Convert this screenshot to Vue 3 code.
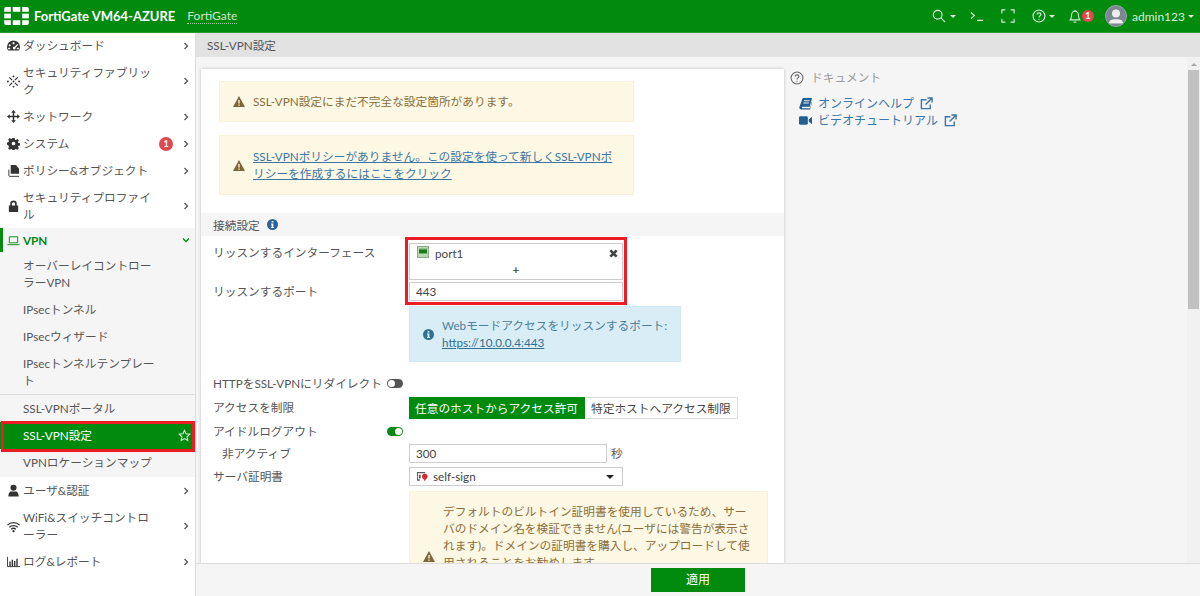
<template>
  <div class="app">
    <header class="topbar">
      <svg class="logo" viewBox="0 0 26 19">
        <path d="M2 0h5v5H0V2a2 2 0 0 1 2-2z" />
        <rect x="9" y="0" width="8" height="5" rx="0.5" />
        <path d="M19 0h5a2 2 0 0 1 2 2v3h-7z" />
        <rect x="0" y="7" width="7" height="5" />
        <rect x="19" y="7" width="7" height="5" />
        <path d="M0 14h7v5H2a2 2 0 0 1-2-2z" />
        <rect x="9" y="14" width="8" height="5" rx="0.5" />
        <path d="M19 14h7v3a2 2 0 0 1-2 2h-5z" />
      </svg>
      <span class="product">FortiGate VM64-AZURE</span>
      <span class="hostname">FortiGate</span>
      <div class="top-tools">
        <svg class="tool" viewBox="0 0 16 16"><circle cx="6.5" cy="6.5" r="5" /><path d="M10.2 10.2 15 15" /></svg>
        <i class="caret first"></i>
        <svg class="tool cli" viewBox="0 0 16 16"><path d="M1 4l4 3.5L1 11M8 13h7" /></svg>
        <svg class="tool full" viewBox="0 0 16 16"><path d="M1 5V1h4M11 1h4v4M15 11v4h-4M5 15H1v-4" /></svg>
        <svg class="tool help" viewBox="0 0 16 16"><circle cx="8" cy="8" r="6.8" /><path d="M5.8 6.2C6 3.8 10.2 3.8 10.2 6.2 10.2 7.8 8 7.8 8 9.6M8 11v1.4" /></svg>
        <i class="caret"></i>
        <svg class="tool bell" viewBox="0 0 16 16"><path d="M2.5 12.5c1.5-1.5 1.5-3 1.5-5.500C4 4.500 6 2.500 8 2.500s4 2 4 4.500c0 2.500 0 4 1.500 5.500zM6.500 14.500c.6.800 2.400.800 3 0M8 1v1.500" /></svg>
        <span class="bell-badge">1</span>
        <span class="avatar">
          <svg viewBox="0 0 24 24"><circle cx="12" cy="9" r="4.8" /><path d="M3.500 21c.5-5 5-5 8.500-5s8 0 8.500 5z" /></svg>
        </span>
        <span class="username">admin123</span>
        <i class="caret"></i>
      </div>
    </header>

    <div class="body-row">
      <nav class="sidebar">
        <template v-for="item in menu" :key="item.label">
          <div class="nav-item" :class="{ open: item.open }">
            <svg class="nav-icon" viewBox="0 0 14 14" v-html="item.icon"></svg>
            <span class="nav-label">{{ item.label }}</span>
            <span v-if="item.badge" class="nav-badge">{{ item.badge }}</span>
            <svg class="chevron" viewBox="0 0 8 8"><path :d="item.open ? 'M1 2.500l3 3 3-3' : 'M2.500 1l3 3-3 3'" /></svg>
          </div>
          <div v-if="item.children" class="sub-list">
            <div
              v-for="sub in item.children"
              :key="sub.label"
              class="sub-item"
              :class="{ active: sub.active, ruled: sub.ruled }"
            >
              <span class="nav-label">{{ sub.label }}</span>
              <svg v-if="sub.active" class="star" viewBox="0 0 24 24"><path d="M12 2.500l2.900 6.300 6.900.8-5.100 4.700 1.400 6.800-6.100-3.400-6.100 3.400 1.400-6.800L2.200 9.600l6.900-.8z" /></svg>
            </div>
          </div>
        </template>
      </nav>

      <main class="main">
        <div class="crumb">SSL-VPN設定</div>
        <div class="work">
          <section class="panel">
            <div class="alerts">
              <div class="alert warn one">
                <svg class="warn-icon" viewBox="0 0 12 11"><path fill-rule="evenodd" d="M6 0l6 11H0zM5.300 4v3.600h1.400V4zm0 4.500v1.300h1.400V8.500z" /></svg>
                <span>SSL-VPN設定にまだ不完全な設定箇所があります。</span>
              </div>
              <div class="alert warn two">
                <svg class="warn-icon" viewBox="0 0 12 11"><path fill-rule="evenodd" d="M6 0l6 11H0zM5.300 4v3.600h1.400V4zm0 4.500v1.300h1.400V8.500z" /></svg>
                <a class="alert-link">SSL-VPNポリシーがありません。この設定を使って新しくSSL-VPNポリシーを作成するにはここをクリック</a>
              </div>
            </div>

            <div class="section-head">
              接続設定
              <svg class="info-icon" viewBox="0 0 12 12"><path fill-rule="evenodd" d="M6 0a6 6 0 1 1 0 12A6 6 0 0 1 6 0zM5 2.200v1.700h2V2.200zM4.400 5v1.200H5v2.400h-.6v1.100h3.200V8.600H7V5z" /></svg>
            </div>

            <div class="form">
              <div class="row iface-row">
                <label>リッスンするインターフェース</label>
                <div class="multi">
                  <div class="multi-entry">
                    <svg class="port-icon" viewBox="0 0 12 12">
                      <rect x="0.5" y="0.5" width="11" height="11" fill="#bcd9b4" stroke="#8aa886" />
                      <path d="M2 3.500h8v4H2z" fill="#1c7a1c" />
                      <path d="M3 2.500v1M5 2.500v1M7 2.500v1M9 2.500v1" stroke="#1c7a1c" />
                    </svg>
                    <span>port1</span>
                    <svg class="remove" viewBox="0 0 10 10"><path d="M1.500 1.500l7 7M8.500 1.500l-7 7" /></svg>
                  </div>
                  <div class="multi-add">+</div>
                </div>
              </div>
              <div class="row port-row">
                <label>リッスンするポート</label>
                <div class="input wide">443</div>
              </div>
              <div class="row">
                <label></label>
                <div class="alert info">
                  <svg class="info-icon" viewBox="0 0 12 12"><path fill-rule="evenodd" d="M6 0a6 6 0 1 1 0 12A6 6 0 0 1 6 0zM5 2.200v1.700h2V2.200zM4.400 5v1.200H5v2.400h-.6v1.100h3.200V8.600H7V5z" /></svg>
                  <div>Webモードアクセスをリッスンするポート:<br /><a class="info-link">https://10.0.0.4:443</a></div>
                </div>
              </div>
              <div class="row redirect-row">
                <label class="auto">HTTPをSSL-VPNにリダイレクト</label>
                <span class="toggle off"></span>
              </div>
              <div class="row access-row">
                <label>アクセスを制限</label>
                <div class="btn-group">
                  <span class="seg on">任意のホストからアクセス許可</span>
                  <span class="seg">特定ホストへアクセス制限</span>
                </div>
              </div>
              <div class="row idle-row">
                <label class="idle-label">アイドルログアウト</label>
                <span class="toggle on"></span>
              </div>
              <div class="row inactive-row">
                <label class="indent">非アクティブ</label>
                <div class="input narrow">300</div>
                <span class="unit">秒</span>
              </div>
              <div class="row cert-row">
                <label>サーバ証明書</label>
                <div class="input wide select">
                  <svg class="cert-icon" viewBox="0 0 12 11">
                    <path d="M0 0h9v1.500H1V8h2v1.500H0z" fill="#5a5a5a" />
                    <path d="M2 3h2v4H2z" fill="#5a5a5a" />
                    <circle cx="8.500" cy="5" r="3" fill="#d9262c" />
                    <path d="M7 7h3l-1.500 3.500z" fill="#d9262c" />
                  </svg>
                  <span>self-sign</span>
                  <i class="caret dark"></i>
                </div>
              </div>
              <div class="row">
                <label></label>
                <div class="alert warn cert-note">
                  <svg class="warn-icon" viewBox="0 0 12 11"><path fill-rule="evenodd" d="M6 0l6 11H0zM5.300 4v3.600h1.400V4zm0 4.500v1.300h1.400V8.500z" /></svg>
                  <span>デフォルトのビルトイン証明書を使用しているため、サーバのドメイン名を検証できません(ユーザには警告が表示されます)。ドメインの証明書を購入し、アップロードして使用されることをお勧めします。</span>
                </div>
              </div>
            </div>
          </section>

          <aside class="docs">
            <div class="docs-title">
              <svg class="docs-q" viewBox="0 0 16 16"><circle cx="8" cy="8" r="6.8" /><path d="M5.800 6.200C6 3.800 10.200 3.800 10.200 6.200 10.200 7.800 8 7.800 8 9.600M8 11v1.400" /></svg>
              ドキュメント
            </div>
            <a class="doc-link">
              <svg class="doc-icon" viewBox="0 0 14 14"><path fill-rule="evenodd" d="M4 1h10l-2.500 9.500H4c-1 0-1.200 1.500 0 1.500h8l1.500-7 .5.500L12 13.500H3c-2 0-3-1-2.500-3zM5.500 3.500l-.3 1h6l.3-1zM4.800 6l-.3 1h6l.3-1z" /></svg>
              オンラインヘルプ
              <svg class="ext" viewBox="0 0 14 14"><path d="M11 8v4.500H1.500V3H7M8 1h5v5M13 1L6 8" /></svg>
            </a>
            <a class="doc-link">
              <svg class="doc-icon" viewBox="0 0 14 14"><rect x="0" y="2.500" width="9.500" height="9" rx="1.500" /><path d="M10.500 6L14 3v8l-3.500-3z" /></svg>
              ビデオチュートリアル
              <svg class="ext" viewBox="0 0 14 14"><path d="M11 8v4.500H1.500V3H7M8 1h5v5M13 1L6 8" /></svg>
            </a>
          </aside>

          <div class="scrollbar">
            <i class="scroll-up"></i>
            <div class="thumb"></div>
          </div>
        </div>
        <footer class="actions">
          <button class="apply" type="button">適用</button>
        </footer>
      </main>
    </div>

    <div class="mark side-mark"></div>
    <div class="mark field-mark"></div>
  </div>
</template>

<script setup>
const menu = [
  { label: 'ダッシュボード', icon: '<path fill-rule="evenodd" d="M7 1.500a7 7 0 0 1 7 7c0 1.500-.4 2.800-1.200 4H1.200C.4 11.300 0 10 0 8.500a7 7 0 0 1 7-7zM6 3.500v2.200h2V3.500zM2.800 5.500L1.600 7l1.500 1.200 1.200-1.500zm8.400 0L8 8.300a1.500 1.500 0 1 0 1.200 1l2.900-3zM1.200 9.500v1.500h2.300V9.500zm9.300 0v1.500h2.300V9.500z" />' },
  { label: 'セキュリティファブリック', icon: '<path d="M2.500 2.500l3 3M11.500 2.500l-3 3M2.500 11.500l3-3M11.500 11.500l-3-3" stroke="#333" stroke-width="1.300" fill="none" /><circle cx="7" cy="1.500" r="1" /><circle cx="7" cy="12.500" r="1" /><circle cx="1" cy="7" r="1" /><circle cx="13" cy="7" r="1" /><circle cx="7" cy="7" r="1" />' },
  { label: 'ネットワーク', icon: '<path d="M7 2v10M2 7h10" stroke="#333" stroke-width="1.600" fill="none" /><path d="M7 0l2.500 3h-5zM7 14l2.500-3h-5zM0 7l3-2.500v5zM14 7l-3-2.500v5z" />' },
  { label: 'システム', badge: 1, icon: '<path fill-rule="evenodd" d="M5.800 1h2.400l.3 1.700 1.100.5 1.500-1 1.700 1.700-1 1.500.5 1.100 1.700.3v2.400l-1.700.3-.5 1.100 1 1.500-1.700 1.700-1.500-1-1.100.5-.3 1.700H5.800l-.3-1.700-1.100-.5-1.500 1-1.700-1.700 1-1.500-.5-1.100L0 8.200V5.800l1.700-.3.500-1.100-1-1.500 1.700-1.700 1.500 1 1.100-.5zM7 5a2 2 0 1 0 0 4 2 2 0 0 0 0-4z" />' },
  { label: 'ポリシー&オブジェクト', icon: '<path d="M4 1h5.500L13 5v5.500H4z" /><path d="M2 6v6.500c0 .4.300.8.800.8H13" stroke="#333" fill="none" />' },
  { label: 'セキュリティプロファイル', icon: '<path fill-rule="evenodd" d="M3.500 6V4a3.500 3.500 0 0 1 7 0v2H12v7H2V6zm1.800 0h3.400V4a1.700 1.700 0 0 0-3.400 0z" />' },
  {
    label: 'VPN',
    open: true,
    icon: '<path d="M2.500 3h9v6.500h-9zM.5 11.500h13" stroke="#008a0e" fill="none" />',
    children: [
      { label: 'オーバーレイコントローラーVPN' },
      { label: 'IPsecトンネル' },
      { label: 'IPsecウィザード' },
      { label: 'IPsecトンネルテンプレート' },
      { label: 'SSL-VPNポータル', ruled: true },
      { label: 'SSL-VPN設定', active: true },
      { label: 'VPNロケーションマップ' },
    ],
  },
  { label: 'ユーザ&認証', icon: '<circle cx="7" cy="4" r="3.300" /><path d="M1.500 13.500c0-4 1.500-5.500 3-5.500h5c1.500 0 3 1.500 3 5.500z" />' },
  { label: 'WiFi&スイッチコントローラー', icon: '<path d="M.5 5.500c3.500-3.500 9.500-3.500 13 0M2.500 7.800c2.500-2.300 6.500-2.300 9 0M4.500 10c1.500-1.300 3.500-1.300 5 0" stroke="#333" stroke-width="1.400" fill="none" /><circle cx="7" cy="12" r="1.200" />' },
  { label: 'ログ&レポート', icon: '<path d="M.5 2v10.500H14" stroke="#333" fill="none" /><path d="M2.500 7h1.500v5H2.500zM5 5h1.500v7H5zM7.500 6.500H9V12H7.500zM10 4h1.500v8H10z" />' },
]
</script>

<style>
html, body {
  margin: 0;
  height: 100%;
  overflow: hidden;
}
</style>

<style scoped>
.app {
  position: relative;
  width: 1200px;
  height: 596px;
  display: flex;
  flex-direction: column;
  overflow: hidden;
  font-family: Lato, "Noto Sans CJK JP", sans-serif;
  font-size: 11.7px;
  color: #555;
  background: #f5f5f5;
}

.topbar {
  height: 33px;
  flex: none;
  display: flex;
  align-items: center;
  background: #008a0e;
  color: #fff;
  box-sizing: border-box;
  border-bottom: 1px solid #2a9c36;
}
.logo {
  width: 25px;
  height: 18px;
  margin-left: 4px;
  fill: #fff;
}
.product {
  margin-left: 5px;
  font-size: 13px;
  font-weight: 700;
}
.hostname {
  margin-left: 12px;
  font-size: 12px;
  color: #cfe8d1;
  border-bottom: 1px dotted #9fd0a4;
  line-height: 15px;
}
.top-tools {
  margin-left: auto;
  display: flex;
  align-items: center;
  padding-right: 6px;
}
.tool {
  width: 14px;
  height: 14px;
  fill: none;
  stroke: #d8eeda;
  stroke-width: 1.3;
}
.caret {
  width: 0;
  height: 0;
  margin-left: 3px;
  border-left: 3px solid transparent;
  border-right: 3px solid transparent;
  border-top: 3px solid #d8eeda;
}
.caret.first {
  margin-left: 4px;
}
.caret.dark {
  margin-left: auto;
  border-left-width: 4px;
  border-right-width: 4px;
  border-top: 4px solid #222;
}
.cli {
  margin-left: 14px;
}
.full {
  margin-left: 17px;
}
.help {
  margin-left: 17px;
}
.bell {
  margin-left: 13px;
}
.bell-badge {
  width: 12px;
  height: 12px;
  border-radius: 50%;
  background: #df4a50;
  color: #fff;
  font-size: 9px;
  font-weight: 700;
  line-height: 12px;
  text-align: center;
}
.avatar {
  width: 22px;
  height: 22px;
  margin-left: 11px;
  border-radius: 50%;
  overflow: hidden;
  background: #7c8794;
  border: 1px solid #9aa4ad;
  box-sizing: border-box;
}
.avatar svg {
  display: block;
  fill: #eee;
}
.username {
  margin-left: 5px;
  font-size: 12px;
  color: #d8eeda;
}

.body-row {
  flex: 1;
  display: flex;
  min-height: 0;
}
.sidebar {
  width: 195px;
  flex: none;
  background: #fff;
  border-right: 1px solid #dcdcdc;
  line-height: 17px;
  color: #555;
}
.nav-item {
  position: relative;
  display: flex;
  align-items: center;
  padding: 5px 0;
}
.nav-item:first-child {
  padding-top: 4px;
}
.nav-item.open {
  background: #f5f5f5;
  color: #008a0e;
  font-weight: 700;
  padding: 3.5px 0;
  box-shadow: inset 3px 0 0 #008a0e;
}
.nav-icon {
  width: 13px;
  height: 13px;
  flex: none;
  margin-left: 7px;
  margin-right: 3px;
  fill: #333;
}
.nav-label {
  width: 137px;
}
.nav-badge {
  position: absolute;
  right: 22px;
  top: 7px;
  width: 14px;
  height: 14px;
  border-radius: 50%;
  background: #df4a50;
  color: #fff;
  font-size: 9px;
  font-weight: 700;
  line-height: 14px;
  text-align: center;
}
.chevron {
  position: absolute;
  right: 5px;
  top: 50%;
  width: 8px;
  height: 8px;
  margin-top: -4px;
  fill: none;
  stroke: #555;
  stroke-width: 1.3;
}
.nav-item.open .chevron {
  stroke: #008a0e;
}
.sub-list {
  background: #f5f5f5;
  padding-bottom: 1px;
}
.sub-item {
  position: relative;
  display: flex;
  align-items: center;
  padding: 5px 0 5px 23px;
}
.sub-item.ruled {
  border-top: 1px solid #dcdcdc;
}
.sub-item.active {
  background: #008a0e;
  color: #fff;
}
.star {
  position: absolute;
  right: 4px;
  top: 7px;
  width: 13px;
  height: 13px;
  fill: none;
  stroke: #d8eeda;
  stroke-width: 2;
}

.main {
  flex: 1;
  min-width: 0;
  display: flex;
  flex-direction: column;
}
.crumb {
  height: 24px;
  flex: none;
  background: #e2e2e2;
  line-height: 24px;
  padding-left: 11px;
}
.work {
  flex: 1;
  min-height: 0;
  display: flex;
  padding-left: 5px;
  overflow: hidden;
}
.panel {
  width: 583px;
  height: 600px;
  flex: none;
  margin-top: 12px;
  box-sizing: border-box;
  background: #fff;
  box-shadow: 0 0 3px #bbb;
}
.alerts {
  width: 415px;
  padding: 12px 18px 18px;
  display: flex;
  flex-direction: column;
  gap: 13px;
}
.alert {
  display: flex;
  align-items: center;
  box-sizing: border-box;
}
.warn {
  background: #fcf8e3;
  border: 1px solid #faf2d7;
  color: #8a6d3b;
  line-height: 17px;
}
.warn-icon {
  width: 12px;
  height: 11px;
  flex: none;
  fill: #7f6538;
  margin-right: 8px;
}
.one {
  height: 41px;
  padding-left: 13px;
}
.two {
  height: 60px;
  padding: 0 15px 0 13px;
}
.alert-link {
  color: #3d76a6;
  text-decoration: underline;
}
.section-head {
  height: 23px;
  display: flex;
  align-items: center;
  gap: 7px;
  padding-left: 12px;
  background: #f5f5f5;
}
.info-icon {
  width: 11px;
  height: 11px;
  fill: #2a6496;
  flex: none;
}
.form {
  padding: 7px 12px 0;
}
.row {
  display: flex;
  align-items: flex-start;
}
.row label {
  width: 196px;
  flex: none;
  line-height: 18px;
}
.row label.auto {
  width: auto;
  margin-right: 5px;
}
.multi {
  width: 214px;
  height: 37px;
  box-sizing: border-box;
  border: 1px solid #ccc;
}
.multi-entry {
  display: flex;
  align-items: center;
  height: 18px;
  padding: 0 4px 0 7px;
  color: #444;
}
.port-icon {
  width: 12px;
  height: 12px;
  margin-right: 6px;
  margin-top: -2px;
}
.remove {
  width: 9px;
  height: 9px;
  margin-left: auto;
  fill: none;
  stroke: #444;
  stroke-width: 3;
}
.multi-add {
  text-align: center;
  font-weight: 700;
  line-height: 15px;
}
.port-row {
  margin-top: 2px;
  height: 24px;
}
.input {
  height: 19px;
  box-sizing: border-box;
  border: 1px solid #ccc;
  background: #fff;
  padding-left: 6px;
  line-height: 17px;
  color: #444;
}
.wide {
  width: 214px;
}
.narrow {
  width: 198px;
}
.info {
  width: 272px;
  height: 56px;
  background: #d9edf7;
  border: 1px solid #cfe8f3;
  color: #4b8096;
  line-height: 17px;
  padding-left: 13px;
  gap: 8px;
}
.info .info-icon {
  fill: #31708f;
}
.info-link {
  color: #31708f;
  text-decoration: underline;
}
.redirect-row {
  margin-top: 13px;
  align-items: center;
  height: 16px;
}
.toggle {
  position: relative;
  width: 16px;
  height: 9px;
  border-radius: 5px;
  display: block;
  box-sizing: border-box;
}
.toggle::after {
  content: "";
  position: absolute;
  top: 1px;
  width: 7px;
  height: 7px;
  border-radius: 50%;
  background: #fff;
}
.toggle.off {
  background: #555;
}
.toggle.off::after {
  left: 1px;
}
.toggle.on {
  background: #0a8a14;
}
.toggle.on::after {
  right: 1px;
}
.access-row {
  margin-top: 6px;
}
.access-row label {
  line-height: 20px;
}
.btn-group {
  display: flex;
  height: 22px;
}
.seg {
  padding: 0 6px;
  line-height: 20px;
  border: 1px solid #ddd;
  border-left: 0;
  color: #444;
}
.seg.on {
  background: #008a0e;
  border-color: #008a0e;
  color: #fff;
}
.idle-row {
  margin-top: 3px;
  height: 18px;
  align-items: center;
}
.row .idle-label {
  width: 174px;
}
.inactive-row {
  margin-top: 4px;
}
.row .indent {
  padding-left: 9px;
  box-sizing: border-box;
}
.unit {
  margin-left: 4px;
  line-height: 18px;
}
.cert-row {
  margin-top: 4px;
}
.select {
  display: flex;
  align-items: center;
  padding-right: 8px;
}
.cert-icon {
  width: 11px;
  height: 10px;
  margin-right: 5px;
  margin-left: 1px;
}
.cert-note {
  width: 359px;
  height: 131px;
  margin-top: 5px;
  padding: 11px 16px 0 13px;
  align-items: flex-start;
}
.cert-note .warn-icon {
  align-self: center;
  margin-top: -11px;
}

.docs {
  flex: 1;
  padding: 12px 0 0 6px;
}
.docs-title {
  display: flex;
  align-items: center;
  gap: 7px;
  color: #999;
  line-height: 17px;
  margin-bottom: 9px;
}
.docs-q {
  width: 14px;
  height: 14px;
  fill: none;
  stroke: #666;
  stroke-width: 1.2;
}
.doc-link {
  display: flex;
  align-items: center;
  padding-left: 9px;
  color: #3d76a6;
  line-height: 17px;
  font-size: 12px;
}
.doc-icon {
  width: 13px;
  height: 13px;
  margin-right: 6px;
  fill: #1f5f93;
}
.ext {
  width: 13px;
  height: 13px;
  margin-left: 6px;
  fill: none;
  stroke: #3d76a6;
  stroke-width: 1.5;
}
.scrollbar {
  width: 13px;
  flex: none;
  background: #f1f1f1;
}
.scroll-up {
  display: block;
  width: 0;
  margin: 6px auto 4px;
  border-left: 3px solid transparent;
  border-right: 3px solid transparent;
  border-bottom: 3px solid #a5a5a5;
}
.thumb {
  width: 11px;
  height: 239px;
  margin-left: 1px;
  background: #c1c1c1;
}

.actions {
  height: 33px;
  flex: none;
  display: flex;
  justify-content: center;
  align-items: center;
  background: #f5f5f5;
  border-top: 1px solid #ddd;
  box-sizing: border-box;
}
.apply {
  width: 94px;
  height: 24px;
  border: 0;
  padding: 0 0 3px;
  background: #008a0e;
  color: #fff;
  font: inherit;
  font-size: 12px;
}

.mark {
  position: absolute;
  box-sizing: border-box;
  border: 3px solid #ed1c24;
  pointer-events: none;
}
.side-mark {
  left: 1px;
  top: 421px;
  width: 194px;
  height: 31px;
}
.field-mark {
  left: 405px;
  top: 237px;
  width: 222px;
  height: 68px;
}
</style>
